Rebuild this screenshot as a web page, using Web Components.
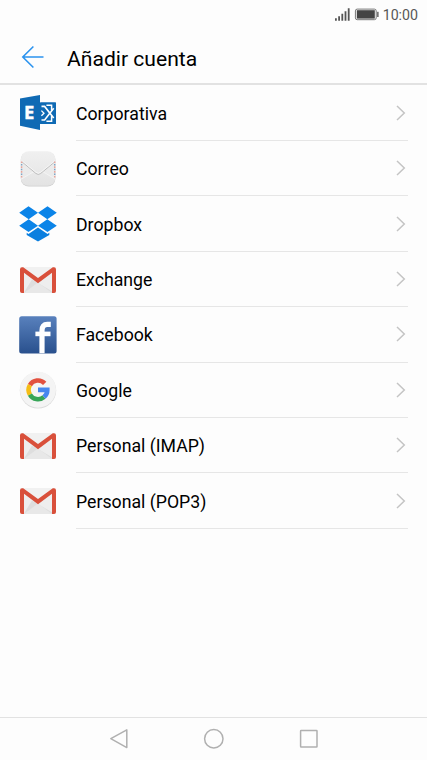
<!DOCTYPE html>
<html lang="es">
<head>
  <meta charset="utf-8">
  <title>Añadir cuenta</title>
  <style>
    body {
      margin: 0;
      background: #fdfdfd;
      color: #000;
      font-family: Roboto, "Liberation Sans", sans-serif;
    }
  </style>
</head>
<body>
  <app-screen>
    <status-bar slot="status">10:00</status-bar>
    <title-bar slot="title">Añadir cuenta</title-bar>
    <account-row icon="exchange">Corporativa</account-row>
    <account-row icon="mail">Correo</account-row>
    <account-row icon="dropbox">Dropbox</account-row>
    <account-row icon="gmail">Exchange</account-row>
    <account-row icon="facebook">Facebook</account-row>
    <account-row icon="google">Google</account-row>
    <account-row icon="gmail">Personal (IMAP)</account-row>
    <account-row icon="gmail">Personal (POP3)</account-row>
    <nav-bar slot="nav"></nav-bar>
  </app-screen>

  <script>
    const ICONS = {
      exchange: `
        <path fill="#0f6ab4" d="M2 5.4 22 2.1V36.9L2 32.8Z"/>
        <rect x="22" y="9.2" width="16" height="21.8" rx=".6" fill="#0f6ab4"/>
        <g fill="none" stroke="#fff" stroke-width="1.6">
          <path d="M23.5 13.4H26.6L35.7 25M23.5 27H26.6L35.7 15.2"/>
          <path d="M28.4 12.2H33.6V17.6M28.4 28.2H33.6V22.7" stroke-width="1.5"/>
          <path d="M23.4 17.6 26 20.2 23.4 22.8" stroke-width="1.3"/>
        </g>
        <text x="6" y="26.4" fill="#fff" stroke="#fff" stroke-width=".4" font-family="Open Sans" font-weight="700" font-size="18.5">E</text>`,
      mail: `
        <defs><linearGradient id="g" x2="0" y2="1"><stop stop-color="#f0f0f0"/><stop offset="1" stop-color="#e3e3e3"/></linearGradient></defs>
        <rect x="2.8" y="3" width="34.6" height="34.6" rx="8" fill="#cfcfcf"/>
        <rect x="2.8" y="2.2" width="34.6" height="34.6" rx="8" fill="url(#g)"/>
        <path fill="#ebebeb" d="M3.5 12 16 22 3.5 30ZM37.2 12 25 22 37.2 30Z"/>
        <path fill="none" stroke="#f6f6f6" stroke-width=".8" d="M3.5 30 16 22.5M37.2 30 24.6 22.5"/>
        <path fill="none" stroke="#bdbdbd" stroke-width="1" d="M4 12.8 18 24.5Q20.3 26.4 22.6 24.5L36.8 12.8"/>
        <path fill="none" stroke="#f9f9f9" stroke-width=".8" d="M4 11.8 18 23.3Q20.3 25.2 22.6 23.3L36.8 11.8"/>
        <g fill="none" stroke-width="1.4">
          <path stroke="#e8a49b" stroke-dasharray="1.6 3.2" d="M3.6 12.5V29M36.7 12.5V29"/>
          <path stroke="#7fa6c6" stroke-dasharray="1.6 3.2" stroke-dashoffset="-2.4" d="M3.6 12.5V29M36.7 12.5V29"/>
        </g>`,
      dropbox: `
        <path fill="#0b84e8" d="M10.5 2.2 20 8.7 10.7 15.2 1.2 8.7ZM29.5 2.2 38.8 8.7 29.3 15.2 20 8.7ZM10.7 15.2 20 21.7 10.5 28 1.2 21.7ZM29.3 15.2 38.8 21.7 29.5 28 20 21.7Z"/>
        <path fill="#0b7fdf" d="M8.7 28.7 10.5 29.9 20 23.5 29.5 29.9 31.3 28.7V31L20 37.6 8.7 31Z"/>`,
      gmail: `
        <rect x="2" y="7.3" width="36" height="25.7" rx="2" fill="#eee"/>
        <path fill="#dedede" d="M14 19.5 37 33H7L6 32.5Z"/>
        <path fill="#e8e8e8" d="M6 33 20 22.5 34 33Z"/>
        <path fill="#f1f1f1" d="M4 7.3H36L20 18.9Z"/>
        <path fill="#d9503b" d="M2 9.5V31Q2 33 4 33H6V12.7L20 23.3 34 12.7V33H36Q38 33 38 31V9.5Q38 7.3 36 7.3H34.8L20 18.1 5.2 7.3H4Q2 7.3 2 9.5Z"/>`,
      facebook: `
        <defs><linearGradient id="g" x2="0" y2="1"><stop stop-color="#5981bd"/><stop offset="1" stop-color="#29508d"/></linearGradient></defs>
        <rect x="1.2" y="1.2" width="37.4" height="37.4" rx="2.5" fill="url(#g)"/>
        <path fill="none" stroke="#fff" stroke-width="5.2" d="M24 38.2V15.4Q24 9.4 29.3 9.4H32.8"/>
        <path fill="none" stroke="#fff" stroke-width="4.6" d="M17.4 18.9H32.5"/>`,
      google: `
        <circle cx="20" cy="20.4" r="18.2" fill="#dadada"/>
        <circle cx="20" cy="19.7" r="18" fill="#f4f4f4"/>
        <g fill="none" stroke-width="4.6">
          <path stroke="#e2513f" d="M11.9 15.2A9.3 9.3 0 0 1 26.7 13.3"/>
          <path stroke="#f5bd15" d="M11.9 24.6A9.3 9.3 0 0 1 11.9 15.2"/>
          <path stroke="#36a557" d="M26 27A9.3 9.3 0 0 1 11.9 24.6"/>
          <path stroke="#4787ee" d="M20 19.9H29.3A9.3 9.3 0 0 1 26 27"/>
        </g>`
    };

    /**
     * Page frame: status and title on top, list in the middle, navigation below
     */
    class AppScreen extends HTMLElement {
      constructor() {
        super();
        this.attachShadow({ mode: 'open' });
        this.shadowRoot.innerHTML = `
          <style>
            :host {
              display: flex;
              flex-direction: column;
              height: 100vh;
              overflow: hidden;
            }

            main {
              flex: 1;
              min-height: 0;
              padding-top: 0.7px;
            }
          </style>
          <slot name="status"></slot>
          <slot name="title"></slot>
          <main><slot></slot></main>
          <slot name="nav"></slot>
        `;
      }
    }

    class StatusBar extends HTMLElement {
      constructor() {
        super();
        this.attachShadow({ mode: 'open' });
        this.shadowRoot.innerHTML = `
          <style>
            :host {
              display: flex;
              align-items: center;
              justify-content: flex-end;
              gap: 4px;
              height: 30px;
              box-sizing: border-box;
              padding-right: 9px;
              font-size: 14.2px;
              color: #575757;
            }
          </style>
          <svg width="46" height="16" viewBox="0 0 46 16">
            <path stroke="#555" stroke-width="1.8" d="M2.9 11.2V13.7M6.1 9.2V13.7M9.3 6.7V13.7M12.5 4.2V13.7M15.7 1.2V13.7"/>
            <rect x="22.4" y="2.1" width="20.8" height="10.6" rx="1.8" fill="#fdfdfd" stroke="#777" stroke-width="1"/>
            <rect x="23.8" y="3.2" width="18" height="8.4" fill="#444"/>
            <rect x="44.1" y="4.8" width="1.5" height="5.2" fill="#666"/>
          </svg>
          <slot></slot>
        `;
      }
    }

    class TitleBar extends HTMLElement {
      constructor() {
        super();
        this.attachShadow({ mode: 'open' });
        this.shadowRoot.innerHTML = `
          <style>
            :host {
              display: flex;
              align-items: center;
              gap: 22px;
              height: 55px;
              box-sizing: border-box;
              padding-left: 21px;
              border-bottom: 2px solid #e2e2e2;
              font-size: 21.1px;
            }

            span {
              padding-top: 3px;
            }
          </style>
          <svg width="24" height="24" viewBox="0 0 24 24" fill="none" stroke="#2b93ee" stroke-width="1.6">
            <path d="M22.5 12H1.8M12.4 1.5 1.8 12 12.4 22.5"/>
          </svg>
          <span><slot></slot></span>
        `;
      }
    }

    /**
     * One account type, the icon attribute is a key of ICONS
     */
    class AccountRow extends HTMLElement {
      constructor() {
        super();
        this.attachShadow({ mode: 'open' });
      }

      connectedCallback() {
        this.shadowRoot.innerHTML = `
          <style>
            :host {
              display: flex;
              gap: 18px;
              height: 55.4px;
              padding: 0 19px 0 18px;
              font-size: 17.7px;
            }

            .icon {
              align-self: center;
              flex: none;
            }

            .content {
              flex: 1;
              display: flex;
              align-items: center;
              justify-content: space-between;
              border-bottom: 1px solid #e6e6e6;
            }

            span {
              padding-top: 2px;
            }

            .arrow {
              margin-right: 1px;
            }
          </style>
          <svg class="icon" width="40" height="40" viewBox="0 0 40 40">${ICONS[this.getAttribute('icon')]}</svg>
          <div class="content">
            <span><slot></slot></span>
            <svg class="arrow" width="12" height="18" viewBox="0 0 12 18" fill="none" stroke="#c4c4c4" stroke-width="1.5">
              <path d="M2 2 9.3 9 2 16"/>
            </svg>
          </div>
        `;
      }
    }

    class NavBar extends HTMLElement {
      constructor() {
        super();
        this.attachShadow({ mode: 'open' });
        this.shadowRoot.innerHTML = `
          <style>
            :host {
              display: flex;
              align-items: center;
              justify-content: center;
              gap: 73px;
              height: 43px;
              box-sizing: border-box;
              border-top: 1px solid #e2e2e2;
            }
          </style>
          <svg width="22" height="22" viewBox="0 0 22 22"><path d="M18.8 1.8V19.6L2.8 10.7Z"/></svg>
          <svg width="22" height="22" viewBox="0 0 22 22"><circle cx="10.8" cy="10.7" r="9.2"/></svg>
          <svg width="22" height="22" viewBox="0 0 22 22"><rect x="2.6" y="2.6" width="16.4" height="16.4" rx=".5"/></svg>
        `;
        this.shadowRoot.querySelectorAll('svg').forEach((svg) => {
          svg.setAttribute('fill', 'none');
          svg.setAttribute('stroke', '#b0b0b0');
          svg.setAttribute('stroke-width', '1.5');
          svg.setAttribute('stroke-linejoin', 'round');
        });
      }
    }

    customElements.define('app-screen', AppScreen);
    customElements.define('status-bar', StatusBar);
    customElements.define('title-bar', TitleBar);
    customElements.define('account-row', AccountRow);
    customElements.define('nav-bar', NavBar);
  </script>
</body>
</html>
